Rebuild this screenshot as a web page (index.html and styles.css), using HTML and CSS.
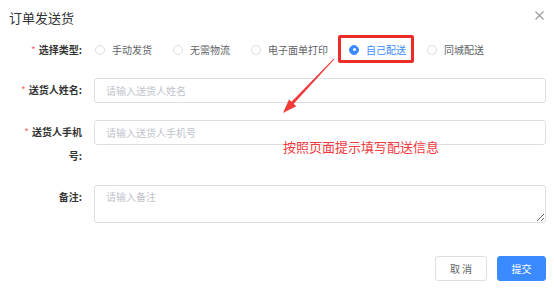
FILE: index.html
```html
<!DOCTYPE html>
<html lang="zh">
<head>
<meta charset="utf-8">
<link rel="stylesheet" href="styles.css">
</head>
<body>
<div class="dialog">
  <div class="header">
    <span class="title">订单发送货</span>
    <svg class="close" width="9" height="9" viewBox="0 0 9 9"><path d="M0.5 0.5L8.5 8.5M8.5 0.5L0.5 8.5" stroke="#9a9a9a" stroke-width="1.1" fill="none"/></svg>
  </div>
  <form class="form">
    <div class="item item-radio">
      <label class="label"><span class="req">*</span>选择类型:</label>
      <div class="control radios">
        <span class="radio"><span class="dot"></span><span class="rtext">手动发货</span></span>
        <span class="radio"><span class="dot"></span><span class="rtext">无需物流</span></span>
        <span class="radio"><span class="dot"></span><span class="rtext">电子面单打印</span></span>
        <span class="radio checked"><span class="dot"></span><span class="rtext">自己配送</span></span>
        <span class="radio"><span class="dot"></span><span class="rtext">同城配送</span></span>
      </div>
    </div>
    <div class="item item-name">
      <label class="label"><span class="req">*</span>送货人姓名:</label>
      <div class="control"><input class="input" placeholder="请输入送货人姓名"></div>
    </div>
    <div class="item item-phone">
      <label class="label"><span class="req">*</span>送货人手机号:</label>
      <div class="control"><input class="input" placeholder="请输入送货人手机号"></div>
    </div>
    <div class="item item-note">
      <label class="label">备注:</label>
      <div class="control"><textarea class="textarea" placeholder="请输入备注"></textarea></div>
    </div>
  </form>
  <div class="footer">
    <button class="btn">取 消</button>
    <button class="btn primary">提交</button>
  </div>
  <div class="mark-box"></div>
  <svg class="mark-arrow" width="70" height="70" viewBox="0 0 70 70">
    <polygon points="56.6,2.7 57.4,3.3 16.7,47.8 19.2,50.2 6,57 12,43.4 14.5,45.8" fill="#f03a3a"/>
  </svg>
  <div class="mark-text">按照页面提示填写配送信息</div>
</div>
</body>
</html>
```
FILE: styles.css
```css
* { box-sizing: border-box; }
html, body { margin: 0; padding: 0; background: #fff; }
body {
  font-family: "Noto Sans CJK SC", "Noto Sans", sans-serif;
  font-size: 10px;
  color: #333;
  width: 554px;
  height: 291px;
  overflow: hidden;
}
.dialog { position: relative; width: 554px; height: 291px; }
.header {
  display: flex;
  justify-content: space-between;
  align-items: center;
  height: 36px;
  padding: 0 10px 0 9px;
}
.title { font-size: 13px; color: #303133; line-height: 18px; margin-top: 0; }
.close { margin-top: -5px; }
.form { padding-right: 8px; }
.item { display: flex; align-items: flex-start; }
.label {
  width: 94px;
  padding-right: 12px;
  padding-left: 16px;
  text-align: right;
  font-weight: bold;
  color: #333;
  line-height: 24px;
  font-size: 10px;
}
.req { color: #f56c6c; margin-right: 3px; font-weight: normal; }
.control { flex: 1; }
.item-radio { margin-top: 1px; height: 25px; align-items: center; }
.item-radio .label { line-height: 25px; }
.item-name { margin-top: 16px; }
.item-phone { margin-top: 17px; }
.item-note { margin-top: 17px; }
.radios { display: flex; align-items: center; height: 25px; padding-left: 1px; }
.radio { display: flex; align-items: center; margin-right: 21px; color: #606266; }
.radio .dot {
  width: 10px; height: 10px; border-radius: 50%;
  border: 1px solid #dcdfe6; background: #fff;
  margin-right: 7px; position: relative;
}
.radio.checked .dot { background: #3a8bff; border-color: #3a8bff; }
.radio.checked .dot::after {
  content: ""; position: absolute; left: 2.5px; top: 2.5px;
  width: 3px; height: 3px; border-radius: 50%; background: #fff;
}
.radio.checked .rtext { color: #3a8bff; }
.rtext { line-height: 14px; }
.input, .textarea {
  display: block;
  width: 100%;
  border: 1px solid #dcdfe6;
  border-radius: 3px;
  font-family: inherit;
  font-size: 10px;
  color: #606266;
  padding: 0 11px;
  outline: none;
  background: #fff;
}
.input { height: 25px; }
.textarea { height: 38px; padding: 4px 11px; resize: vertical; line-height: 14px; }
.input::placeholder, .textarea::placeholder { color: #c0c4cc; }
.footer {
  display: flex;
  justify-content: flex-end;
  gap: 10px;
  padding-right: 8px;
  margin-top: 33px;
}
.btn {
  height: 25px;
  padding: 0 12px;
  border-radius: 3px;
  border: 1px solid #dcdfe6;
  background: #fff;
  color: #606266;
  font-family: inherit;
  font-size: 10px;
  width: 52px;
}
.btn.primary { background: #3a8bff; border-color: #3a8bff; color: #fff; width: 49px; }
.mark-box {
  position: absolute;
  left: 338px; top: 35px;
  width: 76px; height: 28px;
  border: 3px solid #ee2b2b;
  border-radius: 2px;
}
.mark-arrow { position: absolute; left: 277px; top: 56px; }
.mark-text {
  position: absolute;
  left: 283px; top: 138px;
  font-size: 13px;
  line-height: 18px;
  color: #f2393c;
}
```
